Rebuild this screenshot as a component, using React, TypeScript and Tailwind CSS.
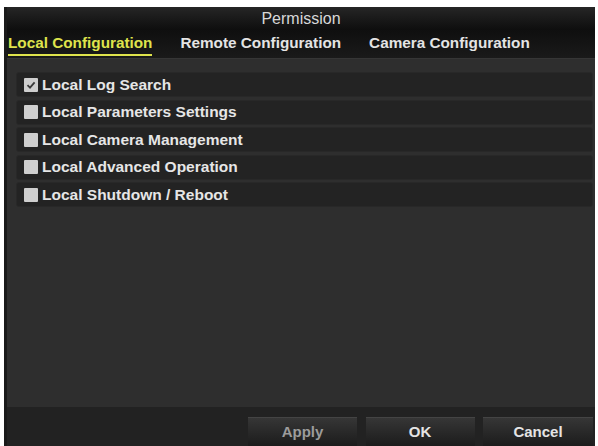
import React from 'react';

const font = { fontFamily: '"Liberation Sans", Arial, sans-serif' };

const items = [
    { label: 'Local Log Search', checked: true },
    { label: 'Local Parameters Settings', checked: false },
    { label: 'Local Camera Management', checked: false },
    { label: 'Local Advanced Operation', checked: false },
    { label: 'Local Shutdown / Reboot', checked: false },
];

function Checkbox({ checked }: { checked: boolean }) {
    return (
        <div className="w-[14px] h-[14px] bg-[#cfcfcf] rounded-[1px] flex items-center justify-center shrink-0">
            {checked && (
                <svg width="10" height="10" viewBox="0 0 10 10">
                    <path d="M1.5 5.2 L4 7.6 L8.6 2.4" fill="none" stroke="#3a3a3a" strokeWidth="1.8" />
                </svg>
            )}
        </div>
    );
}

export default function App() {
    return (
        <div className="w-[598px] h-[446px] bg-white pt-[7px] pl-[4px] pr-[3px] overflow-hidden" style={font}>
            <div className="h-full flex flex-col bg-[#2e2e2e] border-l-[3px] border-[#1a1a1a]">
                {/* Title */}
                <div className="h-[23px] flex items-center justify-center bg-gradient-to-b from-[#262626] to-[#0e0e0e] text-[#d8d8d8] text-[16px]">
                    Permission
                </div>

                {/* Tabs */}
                <div className="h-[28px] flex items-end gap-[28px] pl-[1px] bg-gradient-to-b from-[#0f0f0f] to-[#1a1a1a] text-[15.3px] font-bold">
                    <div className="text-[#dfe34c] border-b-2 border-[#dfe34c] pb-[1px] leading-[20px] mb-[2px]">Local Configuration</div>
                    <div className="text-[#e4e4e4] leading-[20px] pb-[3px] mb-[2px]">Remote Configuration</div>
                    <div className="text-[#e4e4e4] leading-[20px] pb-[3px] mb-[2px]">Camera Configuration</div>
                </div>

                {/* Permission list */}
                <div className="flex-1 flex flex-col gap-[2.5px] pt-[13px] pl-[9px] pr-[2px] border-t border-[#363636]">
                    {items.map((item) => (
                        <div
                            key={item.label}
                            className="h-[25px] flex items-center gap-[4px] pl-[7px] bg-[#232323] rounded-[3px] border border-[#282828]"
                        >
                            <Checkbox checked={item.checked} />
                            <span className="text-[#e6e6e6] text-[15.5px] font-bold">{item.label}</span>
                        </div>
                    ))}
                </div>

                {/* Buttons */}
                <div className="h-[39px] flex justify-end items-start gap-[8.5px] pt-[10px] pr-[2px] bg-[#222222]">
                    <button className="w-[109px] h-[29px] bg-gradient-to-b from-[#363636] to-[#1c1c1c] border-t border-[#444444] text-[#9c9c9c] text-[15px] font-bold">
                        Apply
                    </button>
                    <button className="w-[109px] h-[29px] bg-gradient-to-b from-[#363636] to-[#1c1c1c] border-t border-[#444444] text-[#e4e4e4] text-[15px] font-bold">
                        OK
                    </button>
                    <button className="w-[110px] h-[29px] bg-gradient-to-b from-[#363636] to-[#1c1c1c] border-t border-[#444444] text-[#e4e4e4] text-[15px] font-bold">
                        Cancel
                    </button>
                </div>
            </div>
        </div>
    );
}
